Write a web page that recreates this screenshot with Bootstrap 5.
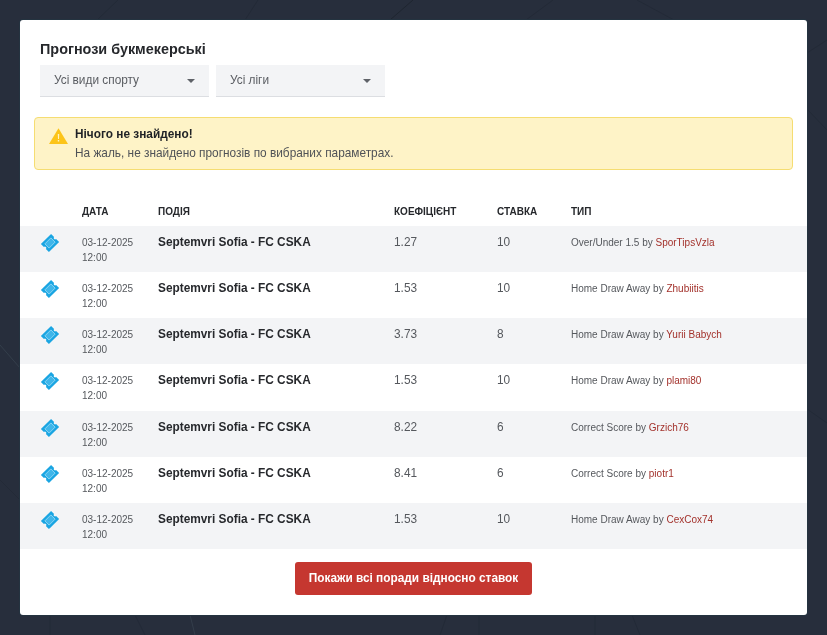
<!DOCTYPE html>
<html lang="uk">
<head>
<meta charset="utf-8">
<title>Прогнози букмекерські</title>
<link rel="stylesheet" href="https://cdn.jsdelivr.net/npm/bootstrap@5.3.0/dist/css/bootstrap.min.css">
<style>
html,body{height:100%}
body{background:#272e3c;font-family:"Liberation Sans",Arial,sans-serif;color:#4a4d52;overflow:hidden}
.bg-lines{position:fixed;inset:0;width:827px;height:635px;z-index:0}
.tips-panel{position:relative;z-index:1;margin:20px;height:595px;background:#fff;border-radius:3px;padding-top:20px;box-shadow:0 0 0 1px #243340}
.tips-head{padding:0 20px}
.tips-title{font-size:14.4px;line-height:18px;font-weight:700;color:#26282c;margin:0 0 7px}
.tips-filters{gap:7px}
.tips-select{width:169px;height:32px;background:#f3f4f6;border-bottom:1px solid #dcdee2;padding:0 14px;font-size:11.85px;color:#5a5d62}
.tips-caret{width:0;height:0;border-left:4.5px solid transparent;border-right:4.5px solid transparent;border-top:4.5px solid #5f6268}
.tips-alert{margin:20px 14px 0 13.5px;height:53px;background:#fef3c7;border:1px solid #f5dd72;border-radius:4px;padding:0 15px;font-size:11.85px;line-height:18.5px;color:#4f5257}
.tips-alert strong{color:#1f2125;display:block}
.tips-warn{margin-top:-16px;margin-left:-1px;margin-right:7.5px}
.tips-table{margin:30px 0 0;width:787px;table-layout:fixed;--bs-table-striped-bg:#f3f4f6;--bs-table-bg:transparent;--bs-table-striped-color:#55585d;--bs-table-color:#55585d}
.tips-table th{font-size:10px;line-height:13px;font-weight:700;text-transform:uppercase;color:#26282c;padding:5px 10px 8px;border:0}
.tips-table td{height:46.17px;padding:0 10px;border:0;vertical-align:top}
.cell-icon{text-align:center}
.cell-icon svg{margin-top:7px;margin-left:8px}
.cell-date{font-size:10px;line-height:15px;padding-top:9px!important}
.cell-event{font-size:11.85px;line-height:16px;font-weight:700;color:#26282c!important;padding-top:8px!important}
.cell-num{font-size:11.85px;line-height:16px;padding-top:8px!important}
.cell-type{font-size:10px;line-height:16px;padding-top:9px!important}
.cell-type a{color:#a3322c;text-decoration:none}
.tips-foot{margin-top:13px}
.tips-cta{background:#c53730;border:0;border-radius:3px;color:#fff;font-size:11.85px;font-weight:700;width:237px;height:33px;padding:0}
.tips-cta:hover{background:#b32f29;color:#fff}
</style>
</head>
<body>
<svg class="bg-lines" viewBox="0 0 827 635" fill="none" stroke="#232a37" stroke-width="1" aria-hidden="true">
<path d="M97 20L118 0M245 20L258 0M526 20L553 0M674 20L637 0"/>
<path stroke="#1f2530" d="M390 20L413 0"/>
<path d="M135 615L145 635M50 615V635M447 615L440 635M479 615V635M595 615V635M632 615L640 635"/>
<path d="M807 53L827 40M807 109L827 130M807 409L827 423M0 480L20 500"/>
<path stroke="#343e4b" d="M190 615L195 635M0 345L20 368"/>
</svg>
<div class="tips-panel">
<div class="tips-head">
<h1 class="tips-title">Прогнози букмекерські</h1>
<div class="d-flex tips-filters">
<div class="tips-select d-flex align-items-center justify-content-between"><span>Усі види спорту</span><span class="tips-caret"></span></div>
<div class="tips-select d-flex align-items-center justify-content-between"><span>Усі ліги</span><span class="tips-caret"></span></div>
</div>
</div>
<div class="tips-alert d-flex align-items-center">
<svg width="19" height="16" viewBox="0 0 19 16" class="tips-warn flex-shrink-0"><path d="M9.500 0.300L19 16H0z" fill="#fcc419"/><path d="M8.800 6h1.400l-.2 5H9zM8.800 12h1.400v1.500H8.800z" fill="#fff3c4"/></svg>
<div><strong>Нічого не знайдено!</strong>На жаль, не знайдено прогнозів по вибраних параметрах.</div>
</div>
<table class="table table-striped tips-table">
<colgroup><col style="width:52px"><col style="width:76px"><col style="width:236px"><col style="width:103px"><col style="width:74px"><col></colgroup>
<thead><tr><th></th><th>Дата</th><th>Подія</th><th>Коефіцієнт</th><th>Ставка</th><th>Тип</th></tr></thead>
<tbody id="rows"></tbody>
</table>
<div class="text-center tips-foot"><a class="btn tips-cta d-inline-flex align-items-center justify-content-center" href="#">Покажи всі поради відносно ставок</a></div>
</div>
<script>
const data=[["1.27","10","Over/Under 1.5","SporTipsVzla"],["1.53","10","Home Draw Away","Zhubiitis"],["3.73","8","Home Draw Away","Yurii Babych"],["1.53","10","Home Draw Away","plami80"],["8.22","6","Correct Score","Grzich76"],["8.41","6","Correct Score","piotr1"],["1.53","10","Home Draw Away","CexCox74"]];
const icon='<svg width="20" height="20" viewBox="0 0 20 20"><g transform="rotate(-45 10 10)"><path d="M2.800 4.300h14.400v4.300a1.400 1.400 0 0 0 0 2.800v4.300H2.800v-4.300a1.400 1.400 0 0 0 0-2.800z" fill="#1aa5e2"/><rect x="5.800" y="7" width="8.400" height="6" fill="#3fb6ea" stroke="#8fd6f3" stroke-width=".9"/></g></svg>';
document.getElementById('rows').innerHTML=data.map(d=>`<tr><td class="cell-icon">${icon}</td><td class="cell-date">03-12-2025<br>12:00</td><td class="cell-event">Septemvri Sofia - FC CSKA</td><td class="cell-num">${d[0]}</td><td class="cell-num">${d[1]}</td><td class="cell-type">${d[2]} by <a href="#">${d[3]}</a></td></tr>`).join('');
</script>
<script src="https://cdn.jsdelivr.net/npm/bootstrap@5.3.0/dist/js/bootstrap.bundle.min.js"></script>
</body>
</html>
